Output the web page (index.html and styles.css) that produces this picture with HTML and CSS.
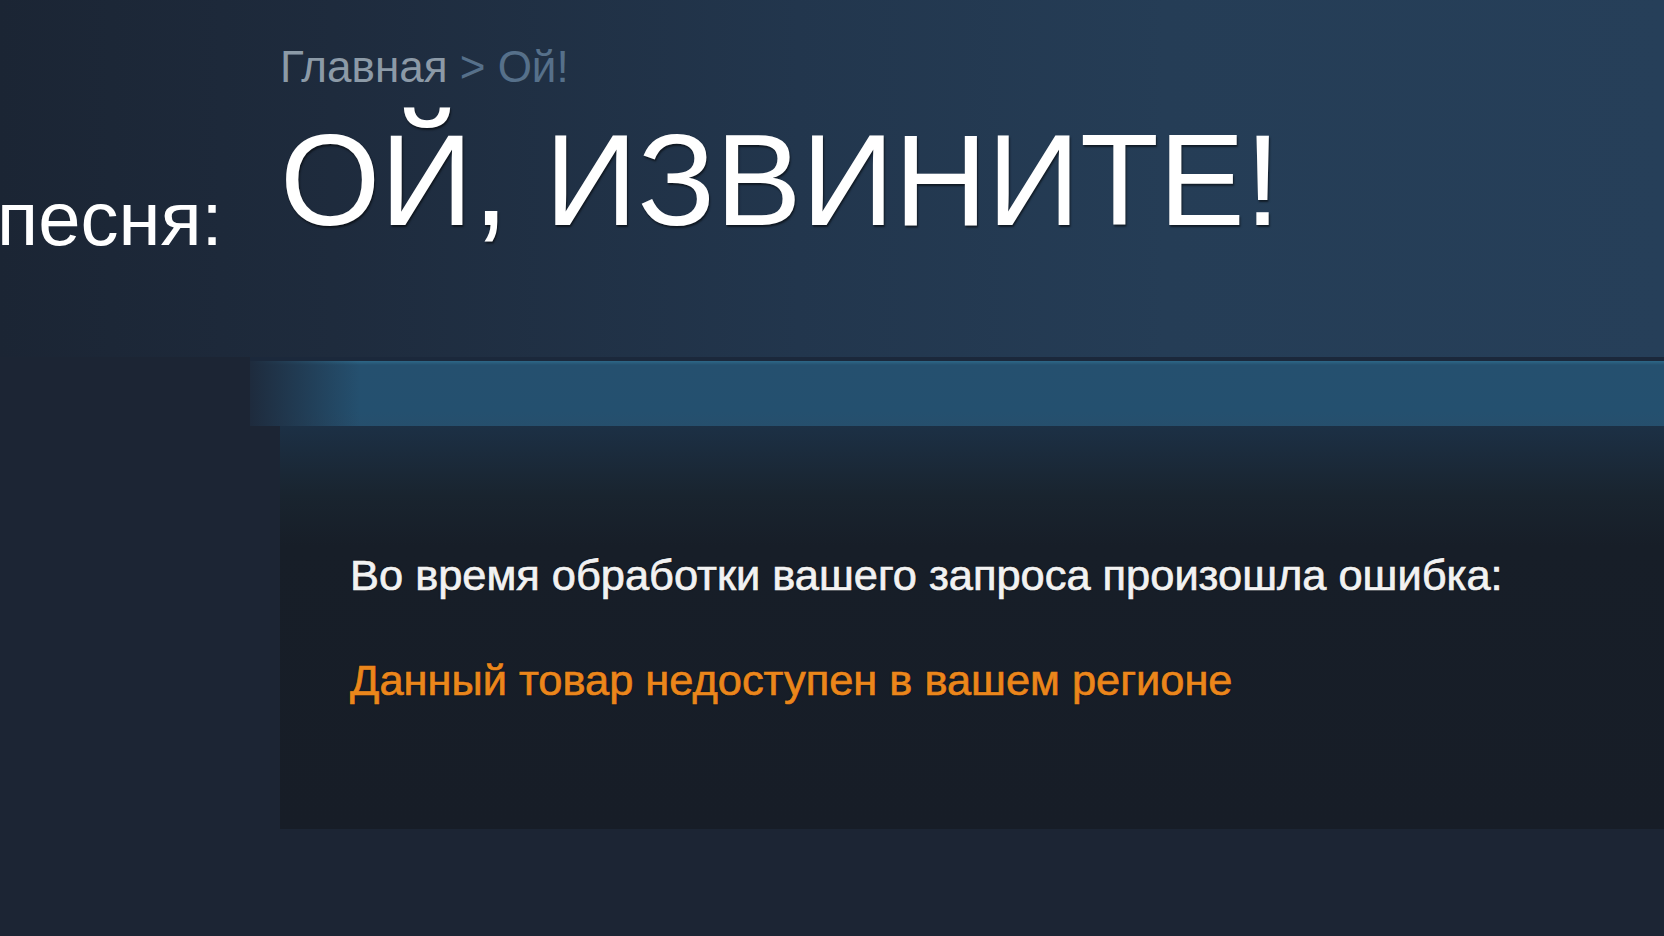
FILE: index.html
```html
<!DOCTYPE html>
<html lang="ru">
    <head>
        <title>Ой, извините!</title>
        <meta charset="UTF-8">
        <meta name="viewport" content="width=device-width, initial-scale=1">
        <link rel="stylesheet" href="styles.css">
    </head>
    <body>
        <main class="page">
            <header class="hero">
                <div class="caption">песня:</div>
                <div class="head">
                    <div class="crumbs"><span class="home">Главная</span> &gt; Ой!</div>
                    <h1>ОЙ, ИЗВИНИТЕ!</h1>
                </div>
            </header>

            <div class="band"></div>

            <section class="panel">
                <p class="msg">Во время обработки вашего запроса произошла ошибка:</p>
                <p class="err">Данный товар недоступен в вашем регионе</p>
            </section>
        </main>
    </body>
</html>
```

FILE: styles.css
```css
html, body {
    margin: 0;
    height: 100%;
}

body {
    font-family: 'Liberation Sans', Arial, sans-serif;
    background-color: #1c2534;
    color: #fff;
    overflow: hidden;
}

.page {
    min-height: 100%;
    background-color: #1c2534;
}

.hero {
    display: flex;
    align-items: flex-start;
    padding: 42px 0 100px;
    background: linear-gradient(90deg, #1b2534 0%, #1e2b3d 20%, #22364d 48%, #253d56 70%, #263f59 100%);
}

.caption {
    flex: 0 0 283px;
    margin-left: -3px;
    margin-top: 139px;
    font-size: 76px;
    line-height: 76px;
    color: #fff;
}

.head {
    flex: 1;
}

.crumbs {
    font-size: 44px;
    line-height: 50px;
    color: #56708a;
}

.crumbs .home {
    color: #8c9aa7;
}

h1 {
    margin: 23px 0 0;
    font-size: 129px;
    line-height: 130px;
    font-weight: normal;
    color: #fff;
    white-space: nowrap;
    text-shadow: 1px 2px 2px rgba(0, 0, 0, 0.55);
}

.band {
    height: 65px;
    margin-left: 250px;
    border-top: 4px solid #1b283b;
    background:
        linear-gradient(90deg, #1e2b3d 0, rgba(30, 43, 61, 0) 110px),
        linear-gradient(180deg, #2d6787 0, #25506f 4px, #24506f 50px, #264f6d 100%);
}

.panel {
    margin-left: 280px;
    height: 403px;
    box-sizing: border-box;
    padding: 123px 0 0 70px;
    background: linear-gradient(180deg, #1c3045 0, #19242f 70px, #171e28 120px, #171d27 100%);
}

.panel p {
    margin: 0;
    font-size: 43.4px;
    line-height: 52px;
    white-space: nowrap;
    -webkit-text-stroke: 0.7px currentColor;
    text-shadow: 0 0 2px rgba(0, 0, 0, 0.7);
}

.msg {
    color: #f2f2f2;
}

.panel .err {
    margin-top: 53px;
    color: #eb861b;
}
```
